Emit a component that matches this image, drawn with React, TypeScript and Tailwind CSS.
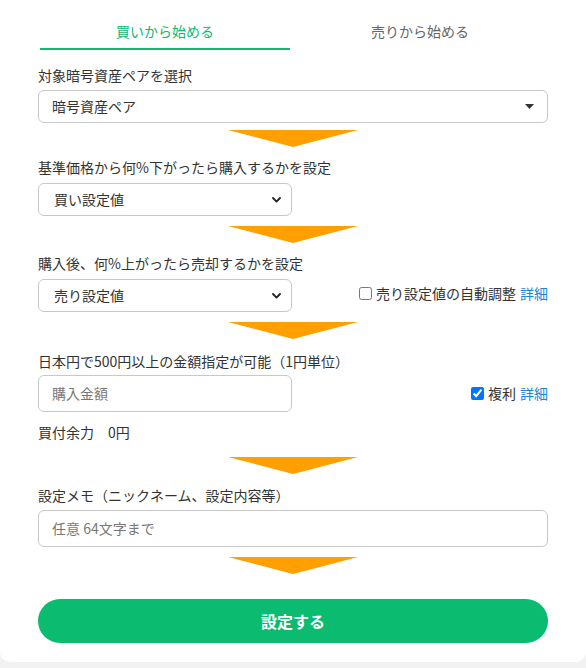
import type { FC } from "react";

const font = { fontFamily: '"Noto Sans CJK JP", "Noto Sans", sans-serif' };

const Arrow: FC<{ className?: string }> = ({ className = "" }) => (
  <div className={`flex justify-center ${className}`}>
    <svg width="130" height="17" viewBox="0 0 130 17">
      <polygon points="0,0 130,0 65,17" fill="#ff9f00" />
    </svg>
  </div>
);

const Chevron: FC = () => (
  <svg width="9" height="6" viewBox="0 0 9 6">
    <path d="M1 1 L4.5 4.6 L8 1" fill="none" stroke="#222" strokeWidth="1.8" strokeLinecap="round" strokeLinejoin="round" />
  </svg>
);

const Label: FC<{ children: React.ReactNode; className?: string }> = ({ children, className = "" }) => (
  <div className={`text-[14px] leading-[20px] text-[#333] ${className}`}>{children}</div>
);

const App: FC = () => {
  return (
    <div className="min-h-[668px] bg-[#f2f2f2]" style={font}>
      <div className="bg-white rounded-b-[10px] pb-[19px]">
        {/* tabs */}
        <div className="flex gap-[5px] pl-[40px]">
          <div className="w-[250px] pt-[20px] pb-[6px] border-b-2 border-[#0bbb70] text-center text-[14px] leading-[22px] text-[#0bbb70]">
            買いから始める
          </div>
          <div className="w-[250px] pt-[20px] pb-[6px] border-b-2 border-transparent text-center text-[14px] leading-[22px] text-[#666]">
            売りから始める
          </div>
        </div>

        <div className="px-[38px]">
          <Label className="mt-[15px]">対象暗号資産ペアを選択</Label>
          <div className="mt-[5px] h-[33px] border border-[#c8c8c8] rounded-[6px] flex items-center justify-between pl-[13px] pr-[13px] text-[14px] text-[#333]">
            <span>暗号資産ペア</span>
            <svg width="9" height="5" viewBox="0 0 9 5">
              <polygon points="0,0 9,0 4.5,5" fill="#333" />
            </svg>
          </div>

          <Arrow className="mt-[7px]" />

          <Label className="mt-[10px]">基準価格から何%下がったら購入するかを設定</Label>
          <div className="mt-[6px] w-[254px] h-[33px] border border-[#c8c8c8] rounded-[6px] flex items-center justify-between pl-[15px] pr-[10px] text-[14px] text-[#333]">
            <span>買い設定値</span>
            <Chevron />
          </div>

          <Arrow className="mt-[10px]" />

          <Label className="mt-[10px]">購入後、何%上がったら売却するかを設定</Label>
          <div className="mt-[6px] flex items-center justify-between">
            <div className="w-[254px] h-[33px] border border-[#c8c8c8] rounded-[6px] flex items-center justify-between pl-[15px] pr-[10px] text-[14px] text-[#333]">
              <span>売り設定値</span>
              <Chevron />
            </div>
            <label className="flex items-center gap-[4px] text-[14px] text-[#333] -mt-[4px]">
              <input type="checkbox" className="w-[13px] h-[13px] m-0" />
              <span>売り設定値の自動調整</span>
              <span className="text-[#1a86d8]">詳細</span>
            </label>
          </div>

          <Arrow className="mt-[10px]" />

          <Label className="mt-[12px]">日本円で500円以上の金額指定が可能（1円単位）</Label>
          <div className="mt-[4px] flex items-center justify-between">
            <div className="w-[254px] h-[37px] border border-[#c8c8c8] rounded-[6px] flex items-center pl-[13px] text-[14px] text-[#777]">
              購入金額
            </div>
            <label className="flex items-center gap-[4px] text-[14px] text-[#333]">
              <input type="checkbox" defaultChecked className="w-[13px] h-[13px] m-0" />
              <span>複利</span>
              <span className="text-[#1a86d8]">詳細</span>
            </label>
          </div>

          <Label className="mt-[10px]">買付余力　0円</Label>

          <Arrow className="mt-[15px]" />

          <Label className="mt-[11px]">設定メモ（ニックネーム、設定内容等）</Label>
          <div className="mt-[5px] h-[37px] border border-[#c8c8c8] rounded-[6px] flex items-center pl-[13px] text-[14px] text-[#777]">
            任意 64文字まで
          </div>

          <Arrow className="mt-[10px]" />

          <button className="mt-[25px] w-full h-[44px] rounded-full bg-[#0bbb70] text-white text-[16px] font-bold">
            設定する
          </button>
        </div>
      </div>
    </div>
  );
};

export default App;
